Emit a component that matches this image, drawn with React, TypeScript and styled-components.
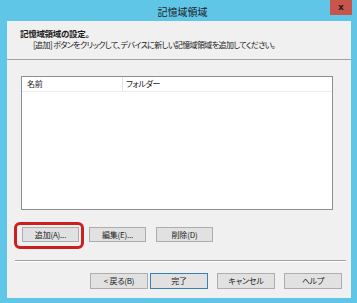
import React from "react";
import styled, { createGlobalStyle } from "styled-components";

const Global = createGlobalStyle`
  html, body { margin: 0; padding: 0; }
  body {
    background: #5fc6e8;
    font-family: "Noto Sans CJK JP", "Noto Sans", sans-serif;
    font-feature-settings: "palt";
    color: #1a1a1a;
  }
`;

const Frame = styled.div`
  width: 357px;
  height: 303px;
  box-sizing: border-box;
  background: #5fc6e8;
  display: flex;
  flex-direction: column;
  padding: 0 6px 5px 7px;
`;

const TitleBar = styled.div`
  height: 21px;
  display: flex;
  align-items: flex-start;
  position: relative;
`;

const TitleText = styled.div`
  flex: 1;
  text-align: center;
  font-size: 10px;
  line-height: 10px;
  padding-top: 7px;
  padding-left: 7px;
  color: #1e1e1e;
`;

const CloseBtn = styled.div`
  position: absolute;
  right: -1px;
  top: 0;
  width: 22px;
  height: 15px;
  background: #c9544c;
  color: #222;
  font-family: "DejaVu Sans", sans-serif;
  font-weight: bold;
  font-size: 9px;
  line-height: 14px;
  text-align: center;
`;

const Client = styled.div`
  flex: 1;
  background: #f0f0f0;
  display: flex;
  flex-direction: column;
`;

const Header = styled.div`
  height: 39px;
  box-sizing: border-box;
  padding: 7px 0 0 13px;
  border-bottom: 1px solid #a0a0a0;
  background: #f0f0f0;
`;

const HeaderTitle = styled.div`
  font-size: 8.5px;
  line-height: 11px;
  font-weight: bold;
  letter-spacing: -0.3px;
`;

const HeaderDesc = styled.div`
  font-size: 8px;
  line-height: 11px;
  padding-left: 13px;
  letter-spacing: -0.6px;
`;

const Body = styled.div`
  display: flex;
  flex-direction: column;
  padding: 16px 18px 0 14px;
`;

const ListBox = styled.div`
  height: 134px;
  border: 1px solid #8a8f96;
  background: #ffffff;
  box-sizing: border-box;
`;

const ListHeader = styled.div`
  display: flex;
  height: 14px;
  border-bottom: 1px solid #ececec;
`;

const HeaderCell = styled.div<{ $w?: number }>`
  width: ${(p) => (p.$w ? `${p.$w}px` : "auto")};
  flex: ${(p) => (p.$w ? "none" : "1")};
  box-sizing: border-box;
  font-size: 8px;
  line-height: 14px;
  padding-left: ${(p) => (p.$w ? "5px" : "3px")};
  border-right: ${(p) => (p.$w ? "1px solid #e4e4e4" : "none")};
  letter-spacing: -0.3px;
`;

const ButtonRow = styled.div`
  display: flex;
  gap: 10px;
  padding: 17px 0 0 1px;
`;

const Btn = styled.div<{ $default?: boolean }>`
  width: 57px;
  height: 15px;
  box-sizing: border-box;
  border: 1px solid ${(p) => (p.$default ? "#3c7fb1" : "#adadad")};
  background: #e1e1e1;
  font-size: 8px;
  line-height: 13px;
  text-align: center;
  color: #1a1a1a;
  letter-spacing: -0.2px;
`;

const Highlight = styled.div`
  position: relative;
  &::after {
    content: "";
    position: absolute;
    left: -8px;
    top: -5px;
    right: -5px;
    bottom: -7px;
    border: 3px solid #cc1f1f;
    border-radius: 6px;
  }
`;

const Separator = styled.div`
  margin: 18px 5px 0 8px;
  height: 0;
  border-top: 1px solid #a0a0a0;
  border-bottom: 1px solid #ffffff;
`;

const Footer = styled.div`
  display: flex;
  justify-content: flex-end;
  padding: 11px 9px 0 0;
  gap: 9px;
`;

const NavGroup = styled.div`
  display: flex;
  gap: 2px;
`;

const FootBtn = styled(Btn)`
  height: 16px;
  line-height: 14px;
  width: 58px;
`;

export default function App() {
  return (
    <>
      <Global />
      <Frame>
        <TitleBar>
          <TitleText>記憶域領域</TitleText>
          <CloseBtn>x</CloseBtn>
        </TitleBar>
        <Client>
          <Header>
            <HeaderTitle>記憶域領域の設定。</HeaderTitle>
            <HeaderDesc>[追加] ボタンをクリックして、デバイスに新しい記憶域領域を追加してください。</HeaderDesc>
          </Header>
          <Body>
            <ListBox>
              <ListHeader>
                <HeaderCell $w={101}>名前</HeaderCell>
                <HeaderCell>フォルダー</HeaderCell>
              </ListHeader>
            </ListBox>
            <ButtonRow>
              <Highlight>
                <Btn>追加(A)...</Btn>
              </Highlight>
              <Btn>編集(E)...</Btn>
              <Btn>削除(D)</Btn>
            </ButtonRow>
          </Body>
          <Separator />
          <Footer>
            <NavGroup>
              <FootBtn>&lt; 戻る(B)</FootBtn>
              <FootBtn $default>完了</FootBtn>
            </NavGroup>
            <FootBtn>キャンセル</FootBtn>
            <FootBtn>ヘルプ</FootBtn>
          </Footer>
        </Client>
      </Frame>
    </>
  );
}
